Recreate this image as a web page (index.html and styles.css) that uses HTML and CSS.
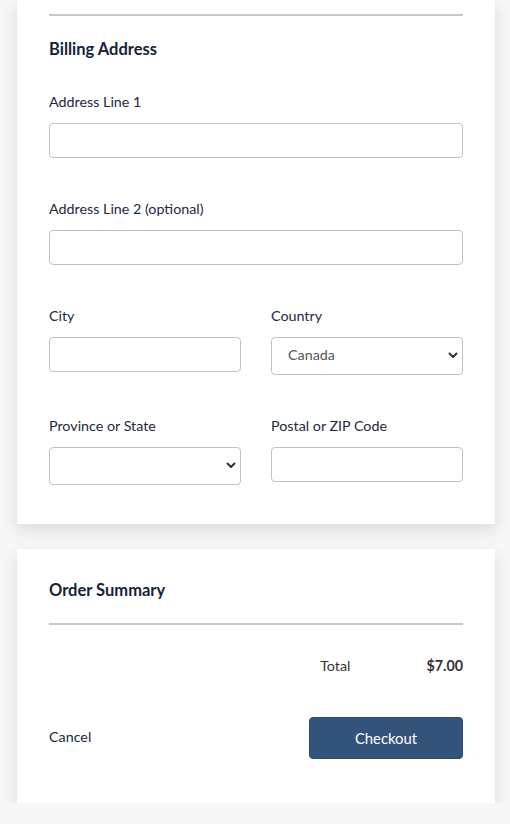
FILE: index.html
```html
<!DOCTYPE html>
<html lang="en">
<head>
<meta charset="utf-8">
<title>Checkout</title>
<link rel="stylesheet" href="styles.css">
</head>
<body>
<main class="page">
  <section class="card card-billing">
    <hr class="divider divider-top">
    <h2 class="card-title">Billing Address</h2>
    <div class="field">
      <label class="label" for="a1">Address Line 1</label>
      <input class="input" id="a1" type="text">
    </div>
    <div class="field">
      <label class="label" for="a2">Address Line 2 (optional)</label>
      <input class="input" id="a2" type="text">
    </div>
    <div class="row">
      <div class="field">
        <label class="label" for="city">City</label>
        <input class="input" id="city" type="text">
      </div>
      <div class="field">
        <label class="label" for="country">Country</label>
        <div class="select-wrap">
          <select class="select" id="country"><option>Canada</option></select>
          <svg class="chevron" width="10" height="7" viewBox="0 0 10 7"><path d="M1.5 1.5 L5 5 L8.5 1.5" fill="none" stroke="#333" stroke-width="2" stroke-linecap="round" stroke-linejoin="round"/></svg>
        </div>
      </div>
    </div>
    <div class="row">
      <div class="field">
        <label class="label" for="prov">Province or State</label>
        <div class="select-wrap">
          <select class="select" id="prov"><option></option></select>
          <svg class="chevron" width="10" height="7" viewBox="0 0 10 7"><path d="M1.5 1.5 L5 5 L8.5 1.5" fill="none" stroke="#333" stroke-width="2" stroke-linecap="round" stroke-linejoin="round"/></svg>
        </div>
      </div>
      <div class="field">
        <label class="label" for="zip">Postal or ZIP Code</label>
        <input class="input" id="zip" type="text">
      </div>
    </div>
  </section>

  <section class="card card-summary">
    <h2 class="card-title">Order Summary</h2>
    <hr class="divider divider-summary">
    <div class="total-row">
      <span class="total-label">Total</span>
      <span class="total-value">$7.00</span>
    </div>
    <div class="actions">
      <a class="cancel" href="#">Cancel</a>
      <button class="checkout" type="button">Checkout</button>
    </div>
  </section>
</main>
</body>
</html>
```

FILE: styles.css
```css
* { box-sizing: border-box; }

html, body {
  margin: 0;
  padding: 0;
  background: #f7f7f7;
}

body {
  font-family: "Lato", "Noto Sans", sans-serif;
  color: #1c2a3c;
  font-size: 14px;
}

.page {
  padding: 0 15px 0 17px;
  display: flex;
  flex-direction: column;
  gap: 25px;
}

.card {
  background: #fff;
  width: 478px;
  padding: 0 32px;
  box-shadow: 0 6px 16px rgba(0, 0, 0, 0.12);
  display: flex;
  flex-direction: column;
}

.card-billing {
  padding-top: 14px;
  padding-bottom: 39px;
}

.card-summary {
  padding-top: 29px;
  padding-bottom: 44px;
}

.divider {
  border: 0;
  height: 2px;
  background: #c9c9c9;
  margin: 0;
  width: 100%;
}

.divider-top { margin-bottom: 21px; }
.divider-summary { margin-top: 21px; }

.card-title {
  margin: 0;
  font-size: 16.5px;
  line-height: 24px;
  font-weight: 700;
  color: #15233a;
}

.card-billing .card-title { margin-bottom: 31px; }

.field {
  display: flex;
  flex-direction: column;
  margin-bottom: 41px;
}

.card-billing > .row:last-child .field { margin-bottom: 0; }

.row {
  display: grid;
  grid-template-columns: 192px 192px;
  column-gap: 30px;
  align-items: start;
}

.label {
  font-size: 14.3px;
  line-height: 20px;
  margin-bottom: 11px;
  color: #1c2a3c;
}

.input {
  height: 35px;
  border: 1px solid #c2c2c2;
  border-radius: 4px;
  background: #fff;
  font: inherit;
  padding: 0 16px;
  width: 100%;
}

.select-wrap {
  position: relative;
}

.select {
  -webkit-appearance: none;
  appearance: none;
  width: 100%;
  height: 38px;
  border: 1px solid #c2c2c2;
  border-radius: 4px;
  background: #fff;
  font: inherit;
  font-size: 14.3px;
  color: #555;
  padding: 0 16px 3px;
  margin: 0;
}

.chevron {
  position: absolute;
  right: 5px;
  top: 15px;
}

.total-row {
  display: flex;
  justify-content: flex-end;
  margin-top: 31px;
  line-height: 20px;
  font-size: 14.3px;
}

.total-label {
  color: #333;
  margin-right: 76px;
}

.total-value {
  font-weight: 700;
  color: #333;
}

.actions {
  display: flex;
  justify-content: space-between;
  align-items: center;
  margin-top: 41px;
}

.cancel {
  color: #1c2a3c;
  text-decoration: none;
  font-size: 14.3px;
  line-height: 20px;
  padding-bottom: 3px;
}

.checkout {
  width: 154px;
  height: 42px;
  background: #33537a;
  border: 1px solid #2c4a6e;
  border-radius: 4px;
  color: #fff;
  font: inherit;
  font-size: 14.8px;
  cursor: pointer;
}
```
